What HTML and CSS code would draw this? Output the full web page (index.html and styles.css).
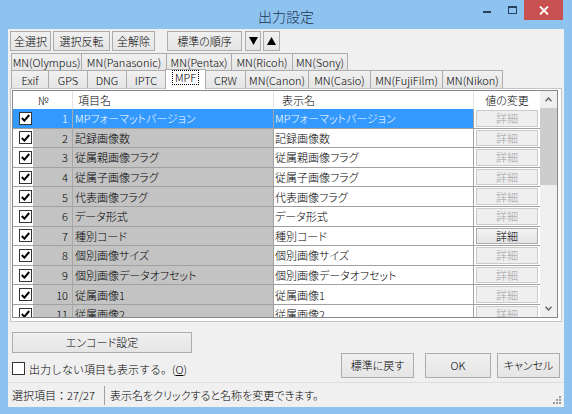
FILE: index.html
```html
<!DOCTYPE html>
<html lang="ja">
<head>
<meta charset="utf-8">
<title>出力設定</title>
<link rel="stylesheet" href="styles.css">
</head>
<body>
<div class="window">
  <header class="titlebar">
    <div class="tb-spacer"></div>
    <div class="title">出力設定</div>
    <div class="controls">
      <span class="ctl ctl-min"><svg width="10" height="10" viewBox="0 0 10 10"><rect x="1" y="6" width="8" height="2" fill="#26405f"/></svg></span>
      <span class="ctl ctl-max"><svg width="11" height="10" viewBox="0 0 11 10"><rect x="1.5" y="1.5" width="8" height="7" fill="none" stroke="#26405f" stroke-width="1"/><rect x="1" y="1" width="9" height="2" fill="#26405f"/></svg></span>
      <span class="ctl ctl-close"><svg width="10" height="9" viewBox="0 0 10 9"><path d="M1 0.5 L9 8.5 M9 0.5 L1 8.5" stroke="#fff" stroke-width="1.8"/></svg></span>
    </div>
  </header>

  <main class="client">
    <div class="toolbar">
      <button class="btn b-all">全選択</button>
      <button class="btn b-inv">選択反転</button>
      <button class="btn b-clr">全解除</button>
      <button class="btn b-std">標準の順序</button>
      <button class="btn b-down"><svg width="9" height="8" viewBox="0 0 9 8"><polygon points="0,0 9,0 4.5,8" fill="#000"/></svg></button>
      <button class="btn b-up"><svg width="9" height="8" viewBox="0 0 9 8"><polygon points="0,8 9,8 4.5,0" fill="#000"/></svg></button>
    </div>

    <div class="tabs">
      <div class="tabrow tabrow-back">
        <span class="tab t-oly">MN(Olympus)</span>
        <span class="tab t-pan">MN(Panasonic)</span>
        <span class="tab t-pen">MN(Pentax)</span>
        <span class="tab t-ric">MN(Ricoh)</span>
        <span class="tab t-son">MN(Sony)</span>
      </div>
      <div class="tabrow tabrow-front">
        <span class="tab t-exif">Exif</span>
        <span class="tab t-gps">GPS</span>
        <span class="tab t-dng">DNG</span>
        <span class="tab t-iptc">IPTC</span>
        <span class="tab t-mpf active"><span class="focus">MPF</span></span>
        <span class="tab t-crw">CRW</span>
        <span class="tab t-can">MN(Canon)</span>
        <span class="tab t-cas">MN(Casio)</span>
        <span class="tab t-fuj">MN(FujiFilm)</span>
        <span class="tab t-nik">MN(Nikon)</span>
      </div>
    </div>

    <section class="panel">
      <div class="grid">
        <div class="gbody">
          <div class="ghead">
            <div class="h h-chk"></div>
            <div class="h h-no">№</div>
            <div class="h h-name">項目名</div>
            <div class="h h-disp">表示名</div>
            <div class="h h-btn">値の変更</div>
          </div>

          <div class="grow sel">
            <div class="c c-chk"><span class="cb"><svg width="9" height="8" viewBox="0 0 9 8"><path d="M0.8 4 L3.4 6.6 L8.2 1" fill="none" stroke="#000" stroke-width="2"/></svg></span></div>
            <div class="c c-no">1</div>
            <div class="c c-name">MPフォーマットバージョン</div>
            <div class="c c-disp">MPフォーマットバージョン</div>
            <div class="c c-btn"><span class="dbtn">詳細</span></div>
          </div>
          <div class="grow">
            <div class="c c-chk"><span class="cb"><svg width="9" height="8" viewBox="0 0 9 8"><path d="M0.8 4 L3.4 6.6 L8.2 1" fill="none" stroke="#000" stroke-width="2"/></svg></span></div>
            <div class="c c-no">2</div>
            <div class="c c-name">記録画像数</div>
            <div class="c c-disp">記録画像数</div>
            <div class="c c-btn"><span class="dbtn">詳細</span></div>
          </div>
          <div class="grow">
            <div class="c c-chk"><span class="cb"><svg width="9" height="8" viewBox="0 0 9 8"><path d="M0.8 4 L3.4 6.6 L8.2 1" fill="none" stroke="#000" stroke-width="2"/></svg></span></div>
            <div class="c c-no">3</div>
            <div class="c c-name">従属親画像フラグ</div>
            <div class="c c-disp">従属親画像フラグ</div>
            <div class="c c-btn"><span class="dbtn">詳細</span></div>
          </div>
          <div class="grow">
            <div class="c c-chk"><span class="cb"><svg width="9" height="8" viewBox="0 0 9 8"><path d="M0.8 4 L3.4 6.6 L8.2 1" fill="none" stroke="#000" stroke-width="2"/></svg></span></div>
            <div class="c c-no">4</div>
            <div class="c c-name">従属子画像フラグ</div>
            <div class="c c-disp">従属子画像フラグ</div>
            <div class="c c-btn"><span class="dbtn">詳細</span></div>
          </div>
          <div class="grow">
            <div class="c c-chk"><span class="cb"><svg width="9" height="8" viewBox="0 0 9 8"><path d="M0.8 4 L3.4 6.6 L8.2 1" fill="none" stroke="#000" stroke-width="2"/></svg></span></div>
            <div class="c c-no">5</div>
            <div class="c c-name">代表画像フラグ</div>
            <div class="c c-disp">代表画像フラグ</div>
            <div class="c c-btn"><span class="dbtn">詳細</span></div>
          </div>
          <div class="grow">
            <div class="c c-chk"><span class="cb"><svg width="9" height="8" viewBox="0 0 9 8"><path d="M0.8 4 L3.4 6.6 L8.2 1" fill="none" stroke="#000" stroke-width="2"/></svg></span></div>
            <div class="c c-no">6</div>
            <div class="c c-name">データ形式</div>
            <div class="c c-disp">データ形式</div>
            <div class="c c-btn"><span class="dbtn">詳細</span></div>
          </div>
          <div class="grow">
            <div class="c c-chk"><span class="cb"><svg width="9" height="8" viewBox="0 0 9 8"><path d="M0.8 4 L3.4 6.6 L8.2 1" fill="none" stroke="#000" stroke-width="2"/></svg></span></div>
            <div class="c c-no">7</div>
            <div class="c c-name">種別コード</div>
            <div class="c c-disp">種別コード</div>
            <div class="c c-btn"><span class="dbtn on">詳細</span></div>
          </div>
          <div class="grow">
            <div class="c c-chk"><span class="cb"><svg width="9" height="8" viewBox="0 0 9 8"><path d="M0.8 4 L3.4 6.6 L8.2 1" fill="none" stroke="#000" stroke-width="2"/></svg></span></div>
            <div class="c c-no">8</div>
            <div class="c c-name">個別画像サイズ</div>
            <div class="c c-disp">個別画像サイズ</div>
            <div class="c c-btn"><span class="dbtn">詳細</span></div>
          </div>
          <div class="grow">
            <div class="c c-chk"><span class="cb"><svg width="9" height="8" viewBox="0 0 9 8"><path d="M0.8 4 L3.4 6.6 L8.2 1" fill="none" stroke="#000" stroke-width="2"/></svg></span></div>
            <div class="c c-no">9</div>
            <div class="c c-name">個別画像データオフセット</div>
            <div class="c c-disp">個別画像データオフセット</div>
            <div class="c c-btn"><span class="dbtn">詳細</span></div>
          </div>
          <div class="grow">
            <div class="c c-chk"><span class="cb"><svg width="9" height="8" viewBox="0 0 9 8"><path d="M0.8 4 L3.4 6.6 L8.2 1" fill="none" stroke="#000" stroke-width="2"/></svg></span></div>
            <div class="c c-no">10</div>
            <div class="c c-name">従属画像1</div>
            <div class="c c-disp">従属画像1</div>
            <div class="c c-btn"><span class="dbtn">詳細</span></div>
          </div>
          <div class="grow">
            <div class="c c-chk"><span class="cb"><svg width="9" height="8" viewBox="0 0 9 8"><path d="M0.8 4 L3.4 6.6 L8.2 1" fill="none" stroke="#000" stroke-width="2"/></svg></span></div>
            <div class="c c-no">11</div>
            <div class="c c-name">従属画像2</div>
            <div class="c c-disp">従属画像2</div>
            <div class="c c-btn"><span class="dbtn">詳細</span></div>
          </div>
        </div>

        <div class="vscroll">
          <div class="sb-arrow"><svg width="7" height="5" viewBox="0 0 7 5"><path d="M0.5 4.2 L3.5 1 L6.5 4.2" fill="none" stroke="#606060" stroke-width="1.4"/></svg></div>
          <div class="sb-thumb"></div>
          <div class="sb-track"></div>
          <div class="sb-arrow"><svg width="7" height="5" viewBox="0 0 7 5"><path d="M0.5 0.8 L3.5 4 L6.5 0.8" fill="none" stroke="#606060" stroke-width="1.4"/></svg></div>
        </div>
      </div>
    </section>

    <div class="lower">
      <div class="lower-left">
        <button class="btn b-enc">エンコード設定</button>
        <label class="opt"><span class="cb cb-empty"></span><span class="opt-text">出力しない項目も表示する。(<u>O</u>)</span></label>
      </div>
      <div class="lower-right">
        <button class="btn b-reset">標準に戻す</button>
        <button class="btn b-ok">OK</button>
        <button class="btn b-cancel">キャンセル</button>
      </div>
    </div>

    <footer class="status">
      <span class="st st-count">選択項目：27/27</span>
      <span class="st st-msg">表示名をクリックすると名称を変更できます。</span>
      <svg class="grip" width="8" height="8" viewBox="0 0 8 8"><g fill="#9a9a9a"><rect x="6" y="0" width="2" height="2"/><rect x="3" y="3" width="2" height="2"/><rect x="6" y="3" width="2" height="2"/><rect x="0" y="6" width="2" height="2"/><rect x="3" y="6" width="2" height="2"/><rect x="6" y="6" width="2" height="2"/></g></svg>
    </footer>
  </main>
</div>
</body>
</html>
```

FILE: styles.css
```css
* { box-sizing: border-box; }

html, body { margin: 0; padding: 0; }

body {
  width: 572px;
  height: 414px;
  overflow: hidden;
  background: #8fc3ef;
  font-family: "Noto Sans CJK JP", "Noto Sans", sans-serif;
  font-size: 11px;
  font-weight: 300;
  color: #000;
  font-feature-settings: "palt";
}

.window {
  display: flex;
  flex-direction: column;
  height: 414px;
}

/* ---------- title bar ---------- */
.titlebar {
  height: 29px;
  flex: none;
  display: grid;
  grid-template-columns: 1fr auto 1fr;
}

.title {
  align-self: center;
  font-size: 14px;
  line-height: 16px;
  padding-top: 2px;
  color: #1d3553;
}

.controls {
  justify-self: end;
  align-self: start;
  display: flex;
  margin-right: 9px;
}

.ctl {
  height: 20px;
  display: flex;
  align-items: center;
  justify-content: center;
}

.ctl-min { width: 26px; }
.ctl-max { width: 24px; }
.ctl-close { width: 39px; background: #c75050; }

/* ---------- client area ---------- */
.client {
  flex: 1;
  min-height: 0;
  margin: 0 8px 7px;
  background: #f0f0f0;
  display: flex;
  flex-direction: column;
}

.btn {
  font: inherit;
  color: #000;
  height: 20px;
  padding: 0;
  border: 1px solid #acacac;
  background: linear-gradient(#f0f0f0, #e5e5e5);
  display: flex;
  align-items: center;
  justify-content: center;
  line-height: 1;
  white-space: nowrap;
}

/* ---------- toolbar ---------- */
.toolbar {
  flex: none;
  height: 22px;
  display: flex;
  gap: 2px;
  padding: 2px 0 0 2px;
}

.b-all { width: 41px; }
.b-inv { width: 57px; }
.b-clr { width: 43px; }
.b-std { width: 75px; margin-left: 10px; }
.b-down { width: 16px; margin-left: 1px; }
.b-up { width: 17px; }

/* ---------- tabs ---------- */
.tabs {
  flex: none;
  margin: 2px 0 0 3px;
}

.tabrow {
  display: flex;
}

.tab {
  display: flex;
  align-items: center;
  justify-content: center;
  border: 1px solid #acacac;
  border-bottom: none;
  background: linear-gradient(#f0f0f0, #e5e5e5);
  margin-right: -1px;
  white-space: nowrap;
}

.tabrow-back .tab { height: 17px; }
.tabrow-front .tab { height: 18px; }

.t-oly { width: 71px; }
.t-pan { width: 86px; }
.t-pen { width: 66px; }
.t-ric { width: 62px; }
.t-son { width: 56px; }

.t-exif { width: 38px; }
.t-gps { width: 40px; }
.t-dng { width: 40px; }
.t-iptc { width: 40px; }
.t-mpf { width: 41px; }
.t-crw { width: 41px; }
.t-can { width: 64px; }
.t-cas { width: 63px; }
.t-fuj { width: 73px; }
.t-nik { width: 61px; }

.tab.active {
  background: #fff;
  height: 20px;
  margin-top: -1px;
  margin-bottom: -1px;
  align-items: flex-start;
  padding-top: 1px;
  position: relative;
  z-index: 1;
}

.focus {
  outline: 1px dotted #000;
  padding: 0 2px;
  line-height: 13px;
}

/* ---------- panel / grid ---------- */
.panel {
  flex: 1;
  min-height: 0;
  margin: 0 2px;
  border: 1px solid #c5c5c5;
  background: #fff;
  padding: 1px 3px 3px 1px;
  display: flex;
}

.grid {
  flex: 1;
  display: flex;
  border: 1px solid #828790;
  overflow: hidden;
  background: #fff;
}

.gbody {
  flex: 1;
  display: flex;
  flex-direction: column;
  overflow: hidden;
}

.ghead,
.grow {
  display: grid;
  grid-template-columns: 20px 40px 201px 1fr 66px;
  flex: none;
}

.ghead {
  height: 18px;
  background: #fff;
}

.h {
  display: flex;
  align-items: center;
  white-space: nowrap;
  border-right: 1px solid #e3e3e3;
}

.h-chk { border-right: none; }
.h-no { padding-left: 5px; }
.h-name { padding-left: 5px; }
.h-disp { padding-left: 8px; }
.h-btn { justify-content: center; border-right: none; }

.grow {
  height: 19.6px;
}

.c {
  display: flex;
  align-items: center;
  white-space: nowrap;
  overflow: hidden;
  border-bottom: 1px solid #a0a0a0;
}

.c-chk { background: #fff; padding-left: 6px; }
.c-no {
  background: #c3c3c3;
  justify-content: flex-end;
  padding-right: 4px;
  border-right: 1px solid #a8a8a8;
}
.c-name {
  background: #c3c3c3;
  padding-left: 2px;
  border-right: 1px solid #a0a0a0;
}
.c-disp {
  background: #fff;
  padding-left: 1px;
  border-right: 1px solid #a0a0a0;
}
.c-btn {
  background: #fff;
  padding: 1px 2px 1px 2px;
  align-items: stretch;
}

.sel .c-chk,
.sel .c-no,
.sel .c-name,
.sel .c-disp {
  background: #3399ff;
  color: #fff;
}

.cb {
  width: 13px;
  height: 13px;
  flex: none;
  border: 1px solid #333;
  background: #fff;
  display: flex;
  align-items: center;
  justify-content: center;
}

.dbtn {
  flex: 1;
  display: flex;
  align-items: center;
  justify-content: center;
  border: 1px solid #cacaca;
  background: #efefef;
  color: #a3a3a3;
}

.dbtn.on {
  border-color: #adadad;
  background: linear-gradient(#f2f2f2, #e4e4e4);
  color: #000;
}

.vscroll {
  width: 17px;
  flex: none;
  display: flex;
  flex-direction: column;
  background: #f0f0f0;
}

.sb-arrow {
  height: 17px;
  flex: none;
  display: flex;
  align-items: center;
  justify-content: center;
}

.sb-thumb {
  height: 77px;
  flex: none;
  background: #cdcdcd;
}

.sb-track { flex: 1; }

/* ---------- lower area ---------- */
.lower {
  flex: none;
  height: 60px;
  display: flex;
  justify-content: space-between;
  align-items: flex-end;
  padding: 0 4px 4px 4px;
}

.lower-left {
  align-self: stretch;
  display: flex;
  flex-direction: column;
  padding-top: 10px;
}

.b-enc { width: 180px; height: 21px; }

.opt {
  display: flex;
  align-items: center;
  gap: 4px;
  margin-top: 9px;
  height: 13px;
  white-space: nowrap;
}

.opt-text { font-feature-settings: normal; }

.lower-right {
  display: flex;
}

.lower-right .btn { height: 25px; }
.b-reset { width: 73px; }
.b-ok { width: 66px; margin-left: 11px; }
.b-cancel { width: 63px; margin-left: 6px; }

/* ---------- status bar ---------- */
.status {
  flex: none;
  height: 25px;
  display: flex;
  align-items: center;
  padding-left: 4px;
  border-top: 1px solid #dedede;
}

.st { white-space: nowrap; }

.st-count {
  width: 93px;
  height: 19px;
  display: flex;
  align-items: center;
  border-right: 1px solid #a0a0a0;
  font-feature-settings: normal;
}

.st-msg { padding-left: 5px; }

.grip {
  margin-left: auto;
  margin-right: 3px;
  align-self: flex-end;
  margin-bottom: 3px;
}
```
